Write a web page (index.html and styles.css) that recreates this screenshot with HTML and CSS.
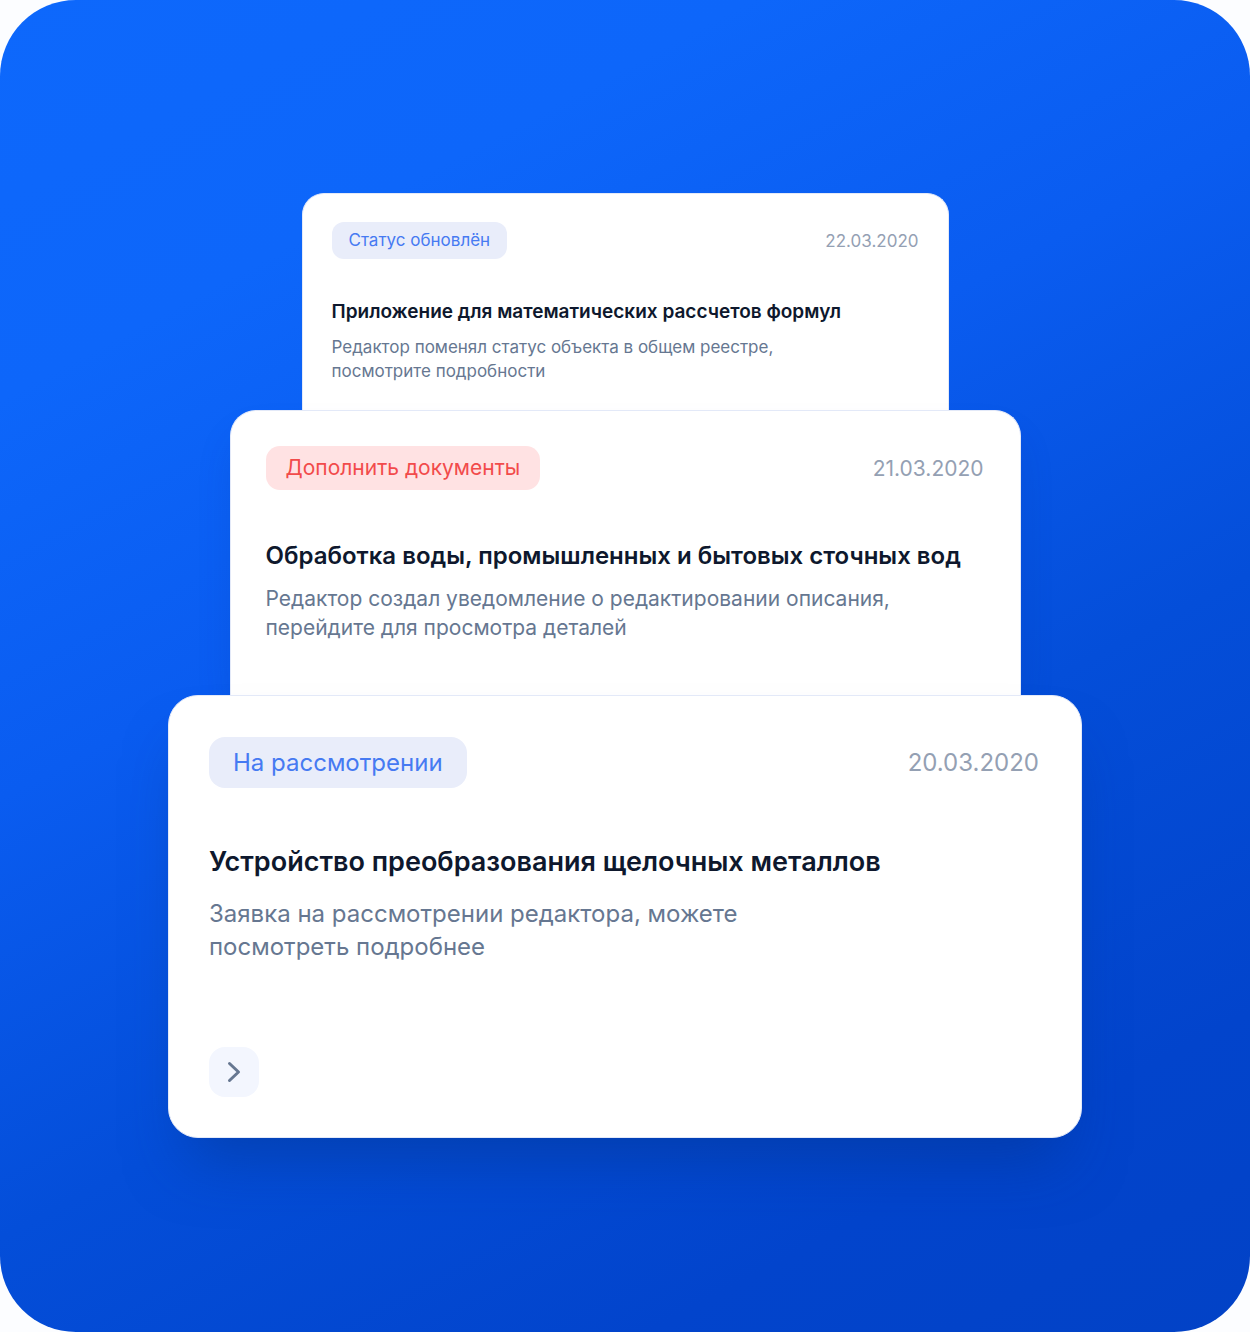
FILE: index.html
```html
<!DOCTYPE html>
<html lang="ru">
<head>
<meta charset="utf-8">
<meta name="viewport" content="width=device-width, initial-scale=1">
<title>Уведомления</title>
<link rel="stylesheet" href="styles.css">
</head>
<body>
<main class="stage">
  <article class="card card--small">
    <header class="card__head">
      <span class="tag">Статус обновлён</span>
      <time class="date" datetime="2020-03-22">22.03.2020</time>
    </header>
    <h2 class="title">Приложение для математических рассчетов формул</h2>
    <p class="text">Редактор поменял статус объекта в общем реестре,<br>посмотрите подробности</p>
  </article>
  <article class="card card--medium">
    <header class="card__head">
      <span class="tag tag--alert">Дополнить документы</span>
      <time class="date" datetime="2020-03-21">21.03.2020</time>
    </header>
    <h2 class="title">Обработка воды, промышленных и бытовых сточных вод</h2>
    <p class="text">Редактор создал уведомление о редактировании описания,<br>перейдите для просмотра деталей</p>
  </article>
  <article class="card card--large">
    <header class="card__head">
      <span class="tag">На рассмотрении</span>
      <time class="date" datetime="2020-03-20">20.03.2020</time>
    </header>
    <h2 class="title">Устройство преобразования щелочных металлов</h2>
    <p class="text">Заявка на рассмотрении редактора, можете<br>посмотреть подробнее</p>
    <button class="open" type="button" aria-label="Открыть">
      <svg width="24" height="24" viewBox="0 0 24 24" fill="none" stroke="currentColor" stroke-width="3" stroke-linecap="round" stroke-linejoin="round" aria-hidden="true"><path d="M7.500 3.500 16.500 12 7.500 20.500"/></svg>
    </button>
  </article>
</main>
</body>
</html>
```
FILE: styles.css
```css
* {
  box-sizing: border-box;
}

body {
  margin: 0;
  background: #fcfdff;
  font-family: Inter, "Liberation Sans", sans-serif;
}

.stage {
  display: flex;
  flex-direction: column;
  align-items: center;
  min-height: 100vh;
  padding: 193px 24px;
  border-radius: 76px;
  background: linear-gradient(152deg, #0d68fc 0%, #0d66fa 20%, #0a5cf0 40%, #044ed9 62%, #0244cc 84%, #0242c6 100%);
}

.card {
  width: 100%;
  border: 1px solid #e3e9f8;
  background: #fff;
}

.card__head {
  display: flex;
  align-items: center;
  justify-content: space-between;
}

.tag {
  background: #e9edfa;
  color: #467af2;
}

.tag--alert {
  background: #ffe2e3;
  color: #f24b4b;
}

.date {
  color: #94a0b3;
}

.title {
  margin: 0;
  color: #0e182d;
  font-weight: 600;
}

.text {
  margin: 0;
  color: #667791;
}

.card--small {
  max-width: 647px;
  padding: 28px 29px 26px;
  border-bottom: 0;
  border-radius: 22px 22px 0 0;
  font-size: 17px;
  line-height: 24px;
}

.card--small .tag {
  padding: 6px 17px 7px;
  border-radius: 12px;
}

.card--small .title {
  margin: 39px 0 9px;
  font-size: 19px;
  line-height: 28px;
}

.card--small .text {
  padding-bottom: 1px;
}

.card--medium {
  max-width: 791px;
  padding: 35px 36px 53px 35px;
  border-bottom: 0;
  border-radius: 26px 26px 0 0;
  box-shadow: 0 24px 40px -8px rgba(2, 50, 150, 0.2);
  font-size: 21px;
  line-height: 29px;
}

.card--medium .tag {
  padding: 7px 20px 8px;
  border-radius: 14px;
}

.card--medium .title {
  margin: 50px 0 12px;
  font-size: 24px;
  line-height: 32px;
}

.card--large {
  max-width: 914px;
  padding: 41px 42px 40px 40px;
  border-radius: 30px;
  box-shadow: 0 40px 60px -20px rgba(4, 52, 140, 0.5);
  font-size: 24px;
  line-height: 33px;
}

.card--large .tag {
  padding: 9px 24px;
  border-radius: 16px;
}

.card--large .title {
  margin: 56px 0 17px;
  font-size: 27px;
  line-height: 36px;
}

.open {
  display: flex;
  align-items: center;
  justify-content: center;
  width: 50px;
  height: 50px;
  margin-top: 84px;
  padding: 0;
  border: 0;
  border-radius: 16px;
  background: #f3f6fe;
  color: #667791;
  cursor: pointer;
}
```
